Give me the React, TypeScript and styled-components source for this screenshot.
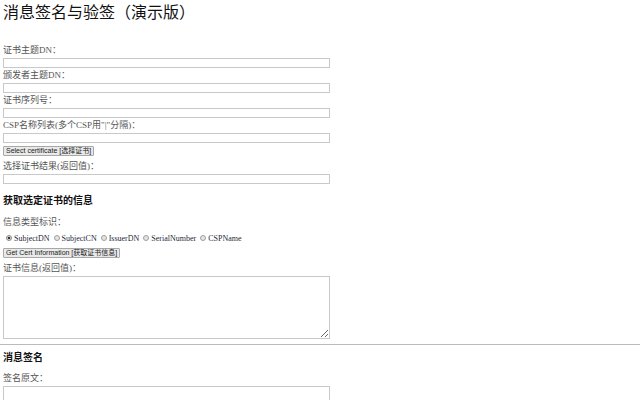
import React from 'react';
import styled, { createGlobalStyle } from 'styled-components';

const GlobalStyle = createGlobalStyle`
  html, body {
    margin: 0;
    padding: 0;
    background: #fff;
  }
  body {
    font-family: "Liberation Serif", "Noto Sans CJK SC", serif;
  }
`;

const Page = styled.div`
  width: 640px;
  height: 400px;
  overflow: hidden;
`;

const Section = styled.div`
  padding: 0 3px;
  display: flex;
  flex-direction: column;
  align-items: flex-start;
`;

const Title = styled.h1`
  margin: 3px 0 0;
  font-size: 16px;
  line-height: 20px;
  font-weight: normal;
  color: #111;
`;

const Heading = styled.h3<{ $top: number }>`
  margin: ${(p) => p.$top}px 0 0;
  font-size: 10px;
  line-height: 12px;
  font-weight: bold;
  color: #111;
`;

const Label = styled.div<{ $top?: number }>`
  margin-top: ${(p) => p.$top ?? 0}px;
  font-size: 9px;
  line-height: 12px;
  color: #555;
`;

const TextBox = styled.input`
  box-sizing: border-box;
  display: block;
  width: 327px;
  height: 10px;
  margin: 2px 0 1px;
  padding: 0;
  border: 1px solid #c9c9c9;
  background: #fff;
`;

const TextArea = styled.textarea`
  box-sizing: border-box;
  display: block;
  width: 327px;
  height: 63px;
  margin: 2px 0 0;
  padding: 0;
  border: 1px solid #c9c9c9;
  background: #fff;
`;

const Button = styled.button<{ $top: number }>`
  margin-top: ${(p) => p.$top}px;
  height: 10px;
  padding: 0 2px;
  font-family: "Liberation Sans", "Noto Sans CJK SC", sans-serif;
  font-size: 7px;
  line-height: 8px;
  color: #222;
  background: #eaeaea;
  border: 1px solid #a8a8a8;
  border-radius: 1px;
`;

const RadioRow = styled.div`
  margin-top: 4px;
  padding-left: 3px;
  display: flex;
  align-items: center;
  gap: 4px;
  height: 12px;
  font-size: 8px;
  color: #1f1f3a;
`;

const RadioItem = styled.label`
  display: flex;
  align-items: center;
  gap: 2px;
`;

const Radio = styled.input`
  appearance: none;
  box-sizing: border-box;
  width: 6px;
  height: 6px;
  margin: 0;
  border-radius: 50%;
  border: 1px solid #a0a0a0;
  background: #e4e4e4;

  &:checked {
    background: radial-gradient(circle, #333 0 1.3px, #dcdcdc 1.6px);
    border-color: #888;
  }
`;

const Rule = styled.hr`
  margin: 5px 0 0;
  border: none;
  border-top: 1px solid #bbb;
  height: 0;
`;

const fields = ['证书主题DN：', '颁发者主题DN：', '证书序列号：', 'CSP名称列表(多个CSP用"|"分隔)：'];
const infoTypes = ['SubjectDN', 'SubjectCN', 'IssuerDN', 'SerialNumber', 'CSPName'];

export default function App() {
  return (
    <Page>
      <GlobalStyle />
      <Section>
        <Title>消息签名与验签（演示版）</Title>
        {fields.map((f, i) => (
          <React.Fragment key={f}>
            <Label $top={i === 0 ? 21 : 0}>{f}</Label>
            <TextBox />
          </React.Fragment>
        ))}
        <Button $top={2}>Select certificate [选择证书]</Button>
        <Label $top={4}>选择证书结果(返回值)：</Label>
        <TextBox />
        <Heading $top={10}>获取选定证书的信息</Heading>
        <Label $top={9}>信息类型标识：</Label>
        <RadioRow>
          {infoTypes.map((t, i) => (
            <RadioItem key={t}>
              <Radio type="radio" name="infotype" defaultChecked={i === 0} />
              {t}
            </RadioItem>
          ))}
        </RadioRow>
        <Button $top={4}>Get Cert Information [获取证书信息]</Button>
        <Label $top={4}>证书信息(返回值)：</Label>
        <TextArea />
      </Section>
      <Rule />
      <Section>
        <Heading $top={7}>消息签名</Heading>
        <Label $top={8}>签名原文：</Label>
        <TextArea />
      </Section>
    </Page>
  );
}
